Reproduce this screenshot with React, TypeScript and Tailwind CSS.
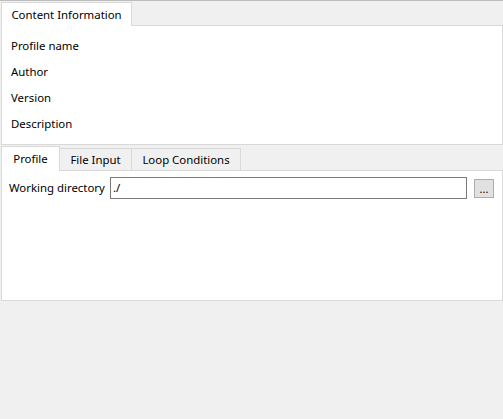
import React from "react";

function InfoRow({ label }: { label: string }) {
  return <div className="h-[26px] flex items-center pl-[9px]">{label}</div>;
}

function Tab({ label, active, width, height }: { label: string; active?: boolean; width: string; height?: string }) {
  if (active) {
    return (
      <div
        className={`${width} ${height ?? "h-[25px]"} -mb-px flex items-center justify-center bg-white border border-b-0 border-[#d9d9d9] relative z-10`}
      >
        {label}
      </div>
    );
  }
  return (
    <div
      className={`${width} h-[22px] flex items-center justify-center bg-[#f0f0f0] border border-l-0 border-b-0 border-[#d9d9d9]`}
    >
      {label}
    </div>
  );
}

export default function App() {
  return (
    <div
      className="w-[503px] h-[419px] bg-[#f0f0f0] border-t border-[#bdbdbd] text-[11.4px] text-[#000]"
      style={{ fontFamily: '"Noto Sans", "Open Sans", sans-serif' }}
    >
      {/* content information */}
      <div className="pl-[1px] pt-[1px]">
        <div className="flex items-end">
          <Tab label="Content Information" active width="w-[131px]" height="h-[24px]" />
        </div>
        <div className="w-[502px] h-[120px] bg-white border border-[#d9d9d9] pt-[7px]">
          <InfoRow label="Profile name" />
          <InfoRow label="Author" />
          <InfoRow label="Version" />
          <InfoRow label="Description" />
        </div>
      </div>

      {/* profile tabs */}
      <div className="pl-[1px] pt-[1px]">
        <div className="flex items-end">
          <Tab label="Profile" active width="w-[59px]" />
          <Tab label="File Input" width="w-[72px]" />
          <Tab label="Loop Conditions" width="w-[109px]" />
        </div>
        <div className="w-[502px] h-[131px] bg-white border border-[#d9d9d9]">
          <div className="flex items-center pt-[6px] pl-[7px]">
            <span className="w-[101px]">Working directory</span>
            <div className="w-[357px] h-[22px] border border-[#7a7a7a] flex items-center pl-[2px]">./</div>
            <button className="ml-[7px] w-[20px] h-[19px] bg-[#e1e1e1] border border-[#adadad] flex items-end justify-center pb-[3px] text-[11px] leading-none">
              ...
            </button>
          </div>
        </div>
      </div>
    </div>
  );
}
